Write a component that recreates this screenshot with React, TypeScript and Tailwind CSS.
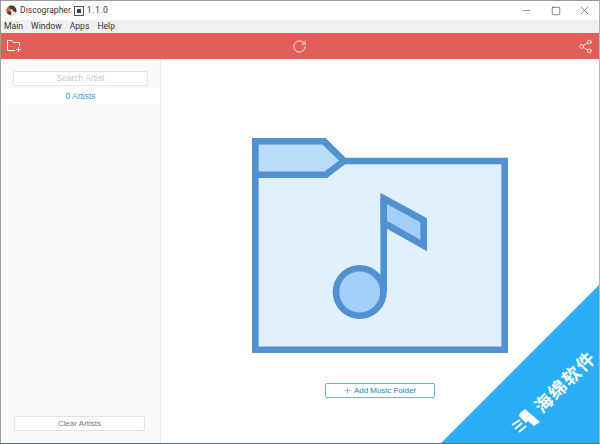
import { Minus, Plus, RotateCw, Share2, Square, X } from "lucide-react";

function AppIcon() {
  return (
    <svg width="11" height="11" viewBox="0 0 12 12" className="shrink-0">
      <circle cx="6" cy="6" r="5.5" fill="#4a3532" />
      <path d="M6 6 L1 8 A5.5 5.5 0 0 1 3 1.500 Z" fill="#d9663c" />
      <path d="M6 6 L11 8 A5.5 5.5 0 0 1 5 11.500 Z" fill="#ece4dc" />
      <circle cx="6" cy="6" r="1.300" fill="#f5f5f5" />
    </svg>
  );
}

function AddFolderIcon() {
  return (
    <svg width="16" height="14" viewBox="0 0 16 14" fill="none" stroke="white" strokeWidth="1">
      <path d="M9 11.500 H1.500 V1.500 H6 L7.500 3.500 H13.500 V7" />
      <path d="M12.500 8 V13 M10 10.500 H15" />
    </svg>
  );
}

function MusicFolder() {
  return (
    <svg width="256" height="215" viewBox="0 0 256 215" className="block">
      <path d="M3.300 3.300 H72 L92 23 H252.700 V211.700 H3.300 Z" fill="#e1f0fd" stroke="#5191d0" strokeWidth="6.600" />
      <path d="M3.300 3.300 H72 L92 23 L74 36.700 H3.300 Z" fill="#b9dcfb" stroke="#5191d0" strokeWidth="6.600" />
      <path d="M131.700 60.500 L171.700 82.300 V107.500 L131.700 85 Z" fill="#a3cffc" stroke="#5191d0" strokeWidth="6.600" />
      <path d="M131.700 60.500 V154" stroke="#5191d0" strokeWidth="6.600" fill="none" />
      <circle cx="107.700" cy="154" r="23.700" fill="#a3cffc" stroke="#5191d0" strokeWidth="6.600" />
    </svg>
  );
}

function Watermark() {
  return (
    <div className="absolute right-0 bottom-0 h-[158px] w-[158px]">
      <svg width="158" height="158" viewBox="0 0 158 158" className="absolute inset-0">
        <polygon points="158,0 158,158 0,158" fill="#2aaef7" />
        <polygon points="79,128 84,124 91,130 92,131 99,137 93,141 87,136 85,138 78,131" fill="white" />
        <path d="M79 135 L71 140 M81 138 L74 144 M85 141 L78 147" stroke="white" strokeWidth="2" fill="none" />
      </svg>
      <span className="absolute top-[96px] left-[123px] -translate-x-1/2 -translate-y-1/2 -rotate-45 font-['Noto_Sans_CJK_SC',sans-serif] text-[18px] leading-none font-bold tracking-[1.500px] whitespace-nowrap text-white">
        海绵软件
      </span>
    </div>
  );
}

export default function App() {
  return (
    <div className="relative flex h-[444px] w-[600px] flex-col overflow-hidden border-t border-r border-b border-l border-t-[#9a9a9a] border-r-[#b5b5b5] border-b-[#5a6f78] border-l-[#9a9a9a] bg-white font-['Liberation_Sans',sans-serif]">
      <div className="flex h-[19px] shrink-0 items-center pl-[5px] font-['Roboto',sans-serif] text-[8.600px] text-[#333]">
        <AppIcon />
        <span className="ml-[3px]">Discographer</span>
        <span className="mx-[3px] flex h-[10px] w-[10px] items-center justify-center border border-[#555]">
          <span className="h-1 w-1 bg-[#444]" />
        </span>
        <span className="tracking-[0.500px]">1.1.0</span>
        <div className="ml-auto flex items-center text-[#444]">
          <span className="flex w-[29px] justify-center">
            <Minus size={11} strokeWidth={1.200} />
          </span>
          <span className="flex w-[29px] justify-center">
            <Square size={10} strokeWidth={1.600} />
          </span>
          <span className="flex w-[29px] justify-center">
            <X size={13} strokeWidth={1.100} />
          </span>
        </div>
      </div>
      <div className="flex h-[13px] shrink-0 items-center gap-[8px] bg-[#f0f0f0] pl-[3px] font-['Roboto',sans-serif] text-[8.600px] text-[#333]">
        <span>Main</span>
        <span>Window</span>
        <span>Apps</span>
        <span>Help</span>
      </div>
      <div className="flex h-[26px] shrink-0 items-center justify-between bg-[#e15f58] pr-[6px] pl-[5px] text-white">
        <AddFolderIcon />
        <RotateCw size={15} strokeWidth={1.300} className="mr-[2px]" />
        <Share2 size={15} strokeWidth={1.300} />
      </div>
      <div className="flex min-h-0 flex-1">
        <aside className="flex w-[160px] shrink-0 flex-col border-r border-[#eeeeee] bg-[#fafafa] text-[8.500px]">
          <div className="mt-[12px] ml-[12px] flex h-[15px] w-[135px] items-center justify-center rounded-[2px] border border-[#e4e4e4] bg-white text-[#c8c8c8]">
            Search Artist
          </div>
          <div className="mt-[2px] flex h-[16px] items-center justify-center bg-white text-[#3b9ddd]">
            0 Artists
          </div>
          <div className="mt-auto mb-[12px] ml-[13px] flex h-[15px] w-[131px] items-center justify-center rounded-[2px] border border-[#e2e2e2] bg-white text-[8px] text-[#777]">
            Clear Artists
          </div>
        </aside>
        <main className="mr-[1px] flex flex-1 flex-col items-center pt-[79px]">
          <MusicFolder />
          <div className="mt-[30px] flex h-[15px] w-[110px] items-center justify-center gap-[2px] rounded-[2px] border border-[#6db3e0] text-[8px] text-[#2f80b8]">
            <Plus size={9} strokeWidth={1.400} />
            Add Music Folder
          </div>
        </main>
      </div>
      <Watermark />
    </div>
  );
}
